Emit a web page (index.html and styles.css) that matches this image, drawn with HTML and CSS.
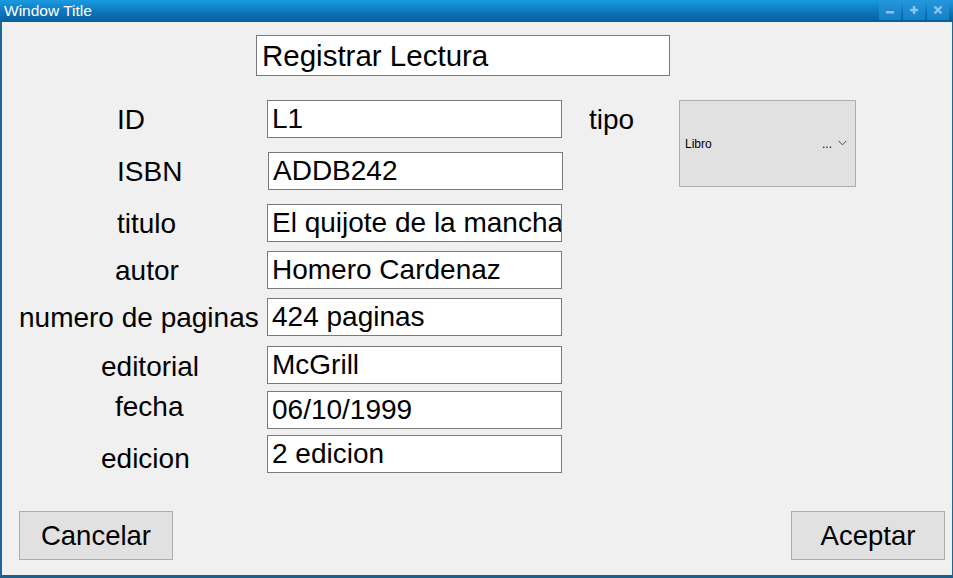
FILE: index.html
```html
<!DOCTYPE html>
<html>
<head>
<meta charset="utf-8">
<link rel="stylesheet" href="styles.css">
</head>
<body>
<div class="window">
  <div class="titlebar">
    <span class="wtitle">Window Title</span>
    <div class="wbtns">
      <span class="wbtn"><svg width="10" height="10" viewBox="0 0 10 10"><rect x="1" y="6" width="8" height="2.5" fill="#8cc4ea"/></svg></span>
      <span class="wbtn"><svg width="10" height="10" viewBox="0 0 10 10"><rect x="1" y="3.8" width="8" height="2.5" fill="#8cc4ea"/><rect x="3.8" y="1" width="2.5" height="8" fill="#8cc4ea"/></svg></span>
      <span class="wbtn"><svg width="10" height="10" viewBox="0 0 10 10"><path d="M1.5 1.5 L8.5 8.5 M8.5 1.5 L1.5 8.5" stroke="#8cc4ea" stroke-width="2.4"/></svg></span>
    </div>
  </div>
  <div class="content">
    <div class="heading-row"><div class="field title-field">Registrar Lectura</div></div>
    <div class="main">
      <div class="form">
        <div class="row r-id"><span class="label l-id">ID</span><div class="field">L1</div></div>
        <div class="row r-isbn"><span class="label l-isbn">ISBN</span><div class="field f-isbn">ADDB242</div></div>
        <div class="row r-titulo"><span class="label l-titulo">titulo</span><div class="field">El quijote de la mancha</div></div>
        <div class="row r-autor"><span class="label l-autor">autor</span><div class="field">Homero Cardenaz</div></div>
        <div class="row r-num"><span class="label l-num">numero de paginas</span><div class="field">424 paginas</div></div>
        <div class="row r-edit"><span class="label l-edit">editorial</span><div class="field">McGrill</div></div>
        <div class="row r-fecha"><span class="label l-fecha">fecha</span><div class="field">06/10/1999</div></div>
        <div class="row r-edic"><span class="label l-edic">edicion</span><div class="field">2 edicion</div></div>
      </div>
      <div class="tipo">
        <span class="label l-tipo">tipo</span>
        <div class="combo"><span class="combo-text">Libro</span><span class="combo-dots">...</span><svg class="combo-arrow" width="9" height="6" viewBox="0 0 9 6"><path d="M0.5 0.8 L4.5 4.8 L8.5 0.8" fill="none" stroke="#444" stroke-width="1"/></svg></div>
      </div>
    </div>
    <div class="buttons">
      <button class="btn">Cancelar</button>
      <button class="btn">Aceptar</button>
    </div>
  </div>
</div>
</body>
</html>
```
FILE: styles.css
```css
* { box-sizing: border-box; }
html, body { margin: 0; padding: 0; }
body { width: 953px; height: 578px; overflow: hidden; font-family: "Liberation Sans", Arial, sans-serif; }
.window {
  width: 953px; height: 578px;
  display: flex; flex-direction: column;
  background: #f0f0f0;
  border-left: 2px solid #1b6797;
  border-right: 1px solid #1b6797;
  border-bottom: 3px solid #1b5f8c;
}
.titlebar {
  height: 22px; flex: none;
  margin-left: -2px; margin-right: -1px;
  background: linear-gradient(#1a9be2, #0b72b8 60%, #075f9c);
  display: flex; align-items: center; justify-content: space-between;
  padding-left: 4px;
}
.wtitle { color: #fff; font-size: 15.5px; line-height: 22px; }
.wbtns { display: flex; gap: 2px; align-self: flex-start; margin-right: 4px; }
.wbtn {
  width: 22px; height: 20px;
  background: linear-gradient(#2595db, #1580c6);
  display: flex; align-items: center; justify-content: center;
}
.content {
  flex: 1; display: flex; flex-direction: column;
  font-size: 28px; color: #000;
}
.field {
  width: 295px; height: 38px; flex: none;
  background: #fff; border: 1px solid #7a7a7a;
  padding-left: 4px; line-height: 36px;
  white-space: nowrap; overflow: hidden;
}
.heading-row { padding-left: 254px; margin-top: 13px; }
.title-field { width: 414px; height: 41px; line-height: 39px; padding-left: 5px; font-size: 29.5px; }
.main { display: flex; margin-top: 24px; }
.form { display: flex; flex-direction: column; }
.row { display: flex; align-items: flex-start; height: 38px; }
.label { display: block; line-height: 38px; white-space: nowrap; }
.row .label { width: 265px; flex: none; }
.r-isbn { margin-top: 14px; }
.r-titulo { margin-top: 14px; }
.r-autor { margin-top: 9px; }
.r-num { margin-top: 9px; }
.r-edit { margin-top: 10px; }
.r-fecha { margin-top: 7px; }
.r-edic { margin-top: 6px; }
.f-isbn { margin-left: 1px; }
.l-id { padding-left: 115px; margin-top: 1px; }
.l-isbn { padding-left: 115px; margin-top: 1px; }
.l-titulo { padding-left: 115px; margin-top: 1px; }
.l-autor { padding-left: 113px; margin-top: 1px; }
.l-num { padding-left: 17px; margin-top: 1px; }
.l-edit { padding-left: 99px; margin-top: 2px; }
.l-fecha { padding-left: 113px; margin-top: -3px; }
.l-edic { padding-left: 99px; margin-top: 5px; }
.tipo { display: flex; align-items: flex-start; margin-left: 26px; }
.l-tipo { width: 90px; margin-top: 1px; }
.combo {
  width: 177px; height: 87px;
  background: #e1e1e1; border: 1px solid #adadad;
  display: flex; align-items: center;
  padding: 0 8px 0 5px; font-size: 12px;
}
.combo-text { flex: 1; }
.combo-dots { margin-right: 6px; }
.combo-arrow { margin-top: -2px; }
.buttons {
  margin-top: auto; margin-bottom: 15px;
  display: flex; justify-content: space-between;
  padding-left: 17px; padding-right: 7px;
}
.btn {
  width: 154px; height: 49px;
  background: #e1e1e1; border: 1px solid #adadad;
  font-family: "Liberation Sans", Arial, sans-serif;
  font-size: 27.5px; color: #000; padding: 0;
}
```
